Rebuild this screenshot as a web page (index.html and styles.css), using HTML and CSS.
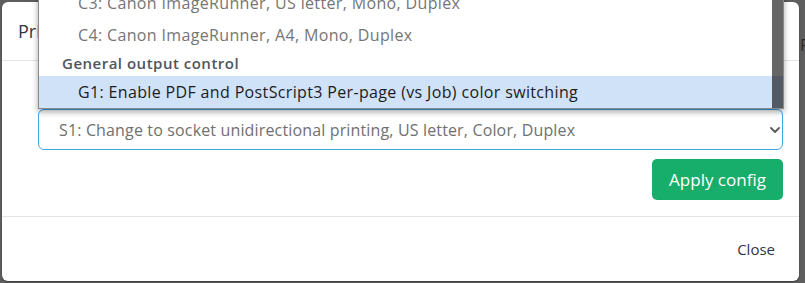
FILE: index.html
```html
<!DOCTYPE html>
<html lang="en">
<head>
  <meta charset="UTF-8">
  <meta name="viewport" content="width=device-width, initial-scale=1.0">
  <title>Printer configuration</title>
  <link rel="stylesheet" href="styles.css">
</head>
<body>
  <div class="page-edge">P</div>
  <div class="modal">
    <div class="modal-header">
      <h3 class="modal-title">Printer configuration</h3>
    </div>
    <div class="modal-body">
      <div class="select-box">
        <span class="select-value">S1: Change to socket unidirectional printing, US letter, Color, Duplex</span>
        <svg class="chevron" viewBox="0 0 10 6" xmlns="http://www.w3.org/2000/svg">
          <path d="M1 1 L5 5 L9 1" fill="none" stroke="#5a5a5a" stroke-width="1.8" stroke-linecap="round" stroke-linejoin="round"/>
        </svg>
      </div>
      <div class="actions">
        <button class="apply-btn">Apply config</button>
      </div>
    </div>
    <div class="modal-footer">
      <button class="close-btn">Close</button>
    </div>
  </div>
  <div class="dropdown">
    <div class="option muted">C3: Canon ImageRunner, US letter, Mono, Duplex</div>
    <div class="option muted">C4: Canon ImageRunner, A4, Mono, Duplex</div>
    <div class="group-label">General output control</div>
    <div class="option active">G1: Enable PDF and PostScript3 Per-page (vs Job) color switching</div>
    <div class="scroll-track"></div>
  </div>
</body>
</html>
```

FILE: styles.css
```css
html, body {
  height: 283px;
  overflow: hidden;
}
body {
  margin: 0;
  padding: 2px 0 0 2px;
  background: #5e5e5e;
  font-family: 'Open Sans', Arial, sans-serif;
  position: relative;
  box-sizing: border-box;
}
.page-edge {
  position: absolute;
  left: 800px;
  top: 34px;
  font-size: 16px;
  color: #2a2a2a;
}
.modal {
  width: 797px;
  height: 279px;
  background: #fff;
  border-radius: 6px;
  box-shadow: 0 1px 2px rgba(0,0,0,0.35);
  display: flex;
  flex-direction: column;
}
.modal-header {
  height: 58px;
  border-bottom: 1px solid #e4e4e4;
  padding: 0 16px;
  display: flex;
  align-items: center;
}
.modal-title {
  margin: 0;
  font-size: 18px;
  font-weight: 500;
  color: #2d3748;
}
.modal-body {
  padding: 48px 16px 16px 36px;
}
.select-box {
  height: 41px;
  box-sizing: border-box;
  border: 1px solid #3ea9ea;
  border-radius: 6px;
  padding: 0 2px 0 20px;
  display: flex;
  align-items: center;
  justify-content: space-between;
}
.select-value {
  font-size: 16px;
  letter-spacing: 0.15px;
  color: #707070;
}
.chevron {
  width: 10px;
  height: 6px;
}
.actions {
  display: flex;
  justify-content: flex-end;
  margin-top: 9px;
}
button {
  font-family: inherit;
  border: none;
  cursor: pointer;
}
.apply-btn {
  width: 131px;
  height: 41px;
  background: #17ad6a;
  color: #fff;
  font-size: 17px;
  border-radius: 5px;
}
.modal-footer {
  flex: 1;
  border-top: 1px solid #e4e4e4;
  padding: 0 16px;
  display: flex;
  align-items: center;
  justify-content: flex-end;
}
.close-btn {
  background: none;
  color: #2d3748;
  font-size: 15px;
  padding: 6px 8px;
}
.dropdown {
  position: absolute;
  left: 38px;
  top: -14px;
  width: 746px;
  box-sizing: border-box;
  background: #fff;
  border: 1px solid #8a8a8a;
  box-shadow: 0 3px 6px rgba(0,0,0,0.35);
  font-size: 16px;
}
.option {
  height: 32px;
  line-height: 32px;
  padding-left: 39px;
  letter-spacing: 0.35px;
}
.option.muted {
  color: #757575;
}
.option.active {
  background: #cfe2f8;
  color: #1c1c1c;
}
.group-label {
  height: 25px;
  line-height: 25px;
  padding-left: 23px;
  font-size: 15px;
  font-weight: 600;
  letter-spacing: 0.5px;
  color: #50555c;
}
.scroll-track {
  position: absolute;
  top: 0;
  right: 0;
  bottom: 0;
  width: 11px;
  background: rgba(0,0,0,0.6);
}
```
